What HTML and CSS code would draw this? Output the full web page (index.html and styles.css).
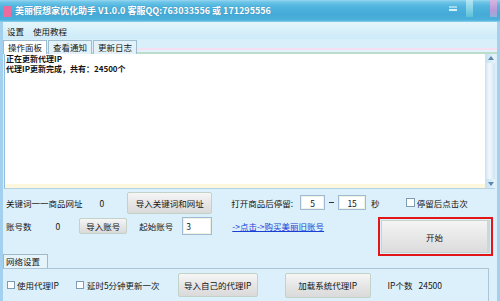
FILE: index.html
```html
<!DOCTYPE html>
<html>
<head>
<meta charset="utf-8">
<link rel="stylesheet" href="styles.css">
</head>
<body>
<div class="titlebar">
  <span class="appicon"></span>
  <span class="title">美丽假想家优化助手 V1.0.0 客服QQ:763033556 或 171295556</span>
  <div class="capbtns">
    <span class="cap min"></span>
    <span class="cap max"></span>
    <span class="cap close"></span>
  </div>
</div>
<div class="frame">
  <div class="menubar"><span>设置</span><span>使用教程</span></div>
  <div class="tabs">
    <span class="tab active">操作面板</span><span class="tab">查看通知</span><span class="tab">更新日志</span>
  </div>
  <div class="log">
    <div class="logtext"><div class="logline">正在更新代理IP</div><div class="logline">代理IP更新完成，共有：24500个</div></div>
    <div class="vscroll"><span class="arrow up"></span><span class="track"></span><span class="arrow down"></span></div>
  </div>
  <div class="controls">
    <div class="row r1">
      <span class="lbl">关键词一一商品网址</span>
      <span class="lbl n1">0</span>
      <span class="btn b-kw">导入关键词和网址</span>
      <span class="lbl stay">打开商品后停留:</span>
      <span class="inp i5">5</span>
      <span class="dash"></span>
      <span class="inp i15">15</span>
      <span class="lbl sec">秒</span>
      <span class="cb cb-click"></span>
      <span class="lbl cbl">停留后点击次</span>
    </div>
    <div class="row r2">
      <span class="lbl">账号数</span>
      <span class="lbl n2">0</span>
      <span class="btn b-acc">导入账号</span>
      <span class="lbl startlbl">起始账号</span>
      <span class="inp i3">3</span>
      <span class="link">-&gt;点击-&gt;购买美丽旧账号</span>
      <span class="startwrap"><span class="startbtn">开始</span></span>
    </div>
  </div>
  <div class="group">
    <span class="gtab">网络设置</span>
    <div class="gpanel">
      <span class="cb cb-proxy"></span><span class="lbl gl1">使用代理IP</span>
      <span class="cb cb-delay"></span><span class="lbl gl2">延时5分钟更新一次</span>
      <span class="btn b-own">导入自己的代理IP</span>
      <span class="btn b-sys">加载系统代理IP</span>
      <span class="lbl ipc">IP个数</span>
      <span class="lbl ipn">24500</span>
    </div>
  </div>
</div>
</body>
</html>
```

FILE: styles.css
```css
* { box-sizing: border-box; margin: 0; padding: 0; }
html, body { width: 500px; height: 301px; overflow: hidden; }
body {
  font-family: "Noto Sans CJK SC", "Noto Sans", sans-serif;
  font-size: 8.5px;
  color: #141414;
  background: #dcf0fb;
}

/* title bar */
.titlebar {
  height: 22px;
  display: flex;
  align-items: center;
  padding-left: 3px;
  background: linear-gradient(to bottom, #9ad6ef 0, #6ec6e8 2px, #52b6df 6px, #45aad7 14px, #4bb0da 20px, #8fd0ec 22px);
}
.appicon {
  width: 8px; height: 11px;
  background: #ea6d9d;
  border-radius: 1px;
}
.title {
  margin-left: 4px;
  font-size: 9px;
  font-weight: bold;
  color: #fff;
  line-height: 12px;
  white-space: nowrap;
  text-shadow: 0 0 1px #3a7fa8;
}
.capbtns { margin-left: auto; display: flex; align-self: flex-start; height: 17px; margin-right: 3px; }
.cap { display: block; height: 17px; }
.min { width: 18px; position: relative; }
.min::after { content: ""; position: absolute; left: 2px; top: 9px; width: 8px; height: 2px; background: #d9f0fa; box-shadow: 0 -3px 0 #9fd8ef; }
.max { width: 7px; margin-left: 1px; background: linear-gradient(to bottom, #b6e6f4, #7fd0e4 60%, #5cc0d8); }
.close { width: 7px; margin-left: 17px; background: linear-gradient(to bottom, #d8b6e2, #b89ad6 60%, #8fb0da); }

/* frame */
.frame {
  height: 279px;
  border-left: 3px solid #a3d0ee;
  border-right: 3px solid #a3d0ee;
  display: flex;
  flex-direction: column;
}
.menubar {
  height: 17px;
  flex: none;
  display: flex;
  align-items: center;
  gap: 9px;
  padding-left: 4px;
  background: linear-gradient(to bottom, #e4f5fc, #cdebf8);
  line-height: 10px;
}
.tabs {
  height: 15px;
  flex: none;
  display: flex;
  align-items: flex-end;
  gap: 1px;
  padding-left: 0;
  background: linear-gradient(to bottom, #d9eff9 0, #d9eff9 9px, #f6dff0 9px, #f6dff0 11px, #e2f2fa 11px, #e2f2fa 13px, #bcdccc 13px, #bcdccc 15px);
}
.tab {
  height: 14px;
  padding: 0 4px;
  line-height: 13px;
  border: 1px solid #9fbdd0;
  border-bottom: none;
  background: #e3f2fa;
}
.tab.active { background: #fff; }

/* log */
.log {
  height: 135px;
  flex: none;
  display: flex;
  margin: 0 2px 0 1px;
  background: #fff;
  border-left: 1px solid #8fbde0;
  border-bottom: 1px solid #b7d3e3;
}
.logtext {
  flex: 1;
  padding: 0 0 0 1px;
  font-weight: bold;
  border-bottom: 4px solid #fdf7de;
}
.logline { height: 10px; line-height: 10px; font-size: 8px; white-space: nowrap; }
.vscroll {
  width: 10px;
  display: flex;
  flex-direction: column;
  background: #e6f1f9;
  border-left: 1px solid #d2e0ea;
}
.arrow { height: 9px; background: linear-gradient(to right, #c8e2f4, #e8f4fb); position: relative; }
.arrow::after { content: ""; position: absolute; left: 2px; border-left: 3px solid transparent; border-right: 3px solid transparent; }
.arrow.up::after { top: 2px; border-bottom: 4px solid #5f87a8; }
.arrow.down::after { top: 3px; border-top: 4px solid #5f87a8; }
.track { flex: 1; background: linear-gradient(to right, #d6e8f5 0, #f2f8fc 40%, #cfe3f2 100%); }

/* controls */
.controls { height: 66px; flex: none; display: flex; flex-direction: column; }
.row { display: flex; padding-left: 3px; }
.r1 { height: 27px; align-items: center; }
.r2 { height: 39px; align-items: flex-start; padding-top: 1px; }
.lbl { white-space: nowrap; line-height: 18px; }
.btn {
  display: flex;
  align-items: center;
  justify-content: center;
  white-space: nowrap;
  border: 1px solid #c3d2c8;
  border-radius: 2px;
  background: linear-gradient(to bottom, #f6f6f6, #e6e6e6 50%, #dadada);
}
.inp {
  display: flex;
  align-items: center;
  justify-content: center;
  background: #fff;
  border: 1px solid #9fbad2;
  box-shadow: inset 0 0 0 1px #eef3e6;
}
.n1 { margin-left: 17px; }
.b-kw { margin-left: 23px; width: 85px; height: 22px; }
.stay { margin-left: 19px; }
.i5 { margin-left: 7px; width: 25px; height: 15px; }
.dash { margin-left: 4px; width: 5px; height: 1px; background: #333; }
.i15 { margin-left: 4px; width: 28px; height: 15px; }
.sec { margin-left: 5px; }
.cb { display: block; width: 9px; height: 9px; background: #fff; border: 1px solid #7d9db6; flex: none; }
.cb-click { margin-left: 26px; }
.cbl { margin-left: 2px; }

.n2 { margin-left: 24px; }
.b-acc { margin-left: 19px; width: 48px; height: 16px; margin-top: 1px; }
.startlbl { margin-left: 12px; }
.i3 { margin-left: 9px; width: 30px; height: 18px; justify-content: flex-start; padding-left: 3px; }
.link { margin-left: 20px; line-height: 18px; color: #1b3fd6; text-decoration: underline; white-space: nowrap; }
.startwrap {
  margin-left: auto;
  margin-right: 4px;
  width: 115px;
  height: 39px;
  border: 2px solid #e21616;
  padding: 1px;
  display: flex;
}
.startbtn {
  flex: 1;
  display: flex;
  align-items: center;
  justify-content: center;
  border: 1px solid #c9d4cf;
  border-right: 3px solid #cfd6d3;
  background: linear-gradient(to bottom, #f4f4f4, #e8e8e8 50%, #dcdcdc);
}

/* group */
.group { flex: 1; display: flex; flex-direction: column; }
.gtab {
  align-self: flex-start;
  height: 14px;
  width: 45px;
  padding-left: 2px;
  line-height: 13px;
  border: 1px solid #9db9cc;
  border-bottom: none;
  background: #e5f3fb;
  margin-top: -1px;
}
.gpanel {
  flex: 1;
  margin-right: 8px;
  border-top: 1px solid #a9c5d6;
  border-right: 1px solid #a9c5d6;
  display: flex;
  align-items: center;
}
.cb-proxy { margin-left: 4px; width: 8px; height: 8px; }
.gl1 { margin-left: 2px; }
.cb-delay { margin-left: 17px; width: 8px; height: 8px; }
.gl2 { margin-left: 3px; }
.b-own { margin-left: 18px; width: 80px; height: 24px; }
.b-sys { margin-left: 27px; width: 86px; height: 25px; }
.ipc { margin-left: 17px; }
.ipn { margin-left: 6px; }
```
